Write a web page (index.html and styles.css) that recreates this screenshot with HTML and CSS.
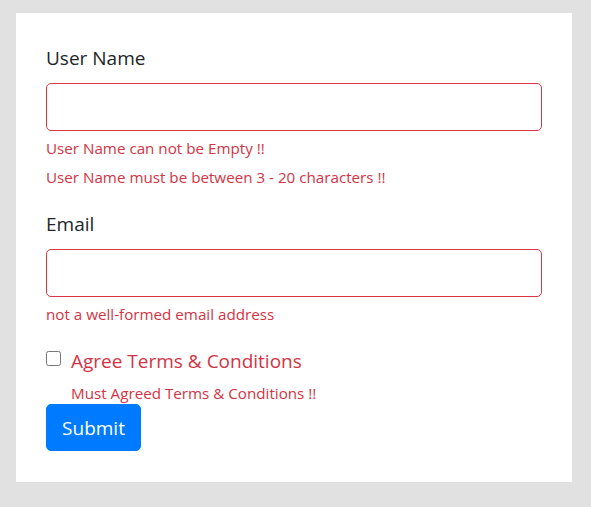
FILE: index.html
```html
<!DOCTYPE html>
<html>
<head>
<meta charset="utf-8">
<link rel="stylesheet" href="styles.css">
</head>
<body>
<div class="card">
  <form class="form">
    <div class="group">
      <label class="label">User Name</label>
      <input class="control invalid" type="text">
      <div class="feedback">User Name can not be Empty !!</div>
      <div class="feedback">User Name must be between 3 - 20 characters !!</div>
    </div>
    <div class="group">
      <label class="label">Email</label>
      <input class="control invalid" type="text">
      <div class="feedback">not a well-formed email address</div>
    </div>
    <div class="check">
      <input class="check-input" type="checkbox">
      <label class="check-label">Agree Terms &amp; Conditions</label>
      <div class="feedback">Must Agreed Terms &amp; Conditions !!</div>
    </div>
    <button class="btn" type="button">Submit</button>
  </form>
</div>
</body>
</html>
```
FILE: styles.css
```css
* { box-sizing: border-box; }
html, body { margin: 0; }
body {
  background: #e1e1e1;
  padding: 13px 16px;
  font-family: "Open Sans", "Noto Sans", sans-serif;
  color: #212529;
}
.card {
  width: 556px;
  background: #fff;
  padding: 30px 30px 31px;
}
.form { display: flex; flex-direction: column; }
.group { display: flex; flex-direction: column; margin-bottom: 20px; }
.label {
  font-size: 19px;
  line-height: 30px;
  margin-bottom: 10px;
}
.control {
  display: block;
  width: 100%;
  height: 48px;
  border: 1px solid #dc3545;
  border-radius: 5px;
  background: #fff;
  padding: 7px 15px;
  font: inherit;
  margin: 0;
}
.feedback {
  margin-top: 5px;
  font-size: 15.2px;
  line-height: 24px;
  color: #d23444;
}
.check {
  position: relative;
  padding-left: 25px;
  margin-bottom: -1px;
}
.check-input {
  position: absolute;
  left: 0;
  top: 5px;
  width: 15px;
  height: 15px;
  margin: 0;
}
.check-label {
  display: block;
  font-size: 19px;
  line-height: 30px;
  color: #d23444;
}
.btn {
  align-self: flex-start;
  height: 47px;
  width: 95px;
  padding: 0;
  border: 1px solid #007bff;
  border-radius: 5px;
  background: #007bff;
  color: #fff;
  font-family: inherit;
  font-size: 19px;
  line-height: 30px;
}
```
